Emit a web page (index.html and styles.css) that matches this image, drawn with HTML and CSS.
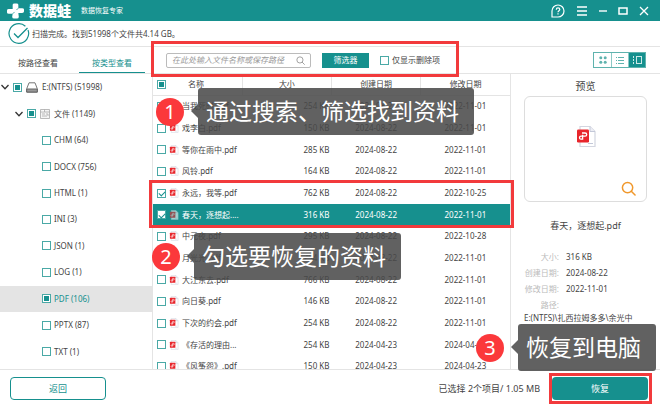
FILE: index.html
```html
<!DOCTYPE html>
<html lang="zh-CN">
<head>
<meta charset="utf-8">
<title>数据蛙数据恢复专家</title>
<link rel="stylesheet" href="styles.css">
</head>
<body>
<svg class="sprite" aria-hidden="true">
  <symbol id="pdf" viewBox="0 0 20 22">
    <path d="M4 1h10l5 5v15H4z" fill="#fff" stroke="#d3d6e0" stroke-width="1.2"/>
    <path d="M14 1v5h5" fill="#eceef4" stroke="#c3c8d8"/>
    <path d="M12 18h5" stroke="#c3c8d8"/>
    <rect x="1" y="4" width="12" height="13" rx="1.2" fill="#e8262c"/>
    <path d="M6 7.500h3.100a1.600 1.600 0 0 1 0 3.200H5a1.500 1.500 0 0 0 0 3h1.600V9.200" fill="none" stroke="#fff" stroke-width="1.300"/>
  </symbol>
  <symbol id="search" viewBox="0 0 16 16">
    <circle cx="7" cy="7" r="5.500" fill="none" stroke="currentColor" stroke-width="1.600"/>
    <path d="M11 11l4 4" stroke="currentColor" stroke-width="1.600" stroke-linecap="round"/>
  </symbol>
  <symbol id="chevron" viewBox="0 0 8 6"><path d="M.5 1L4 4.700 7.500 1" fill="none" stroke="#333" stroke-width="1.300"/></symbol>
</svg>
<div class="app">
  <header class="titlebar">
    <svg class="logo" viewBox="0 0 18 16"><path d="M6 1.500Q6 0 8 0h2q2 0 2 1.500V5h4q2 0 2 1.500v2Q18 10 16 10h-4l.5 4q0 2-2 2h-3q-2 0-2-2L6 11H2q-2 0-2-1.500v-2Q0 6 2 6h4z" fill="#fff"/><path d="M6 11l2-2M12 5l-2 2" stroke="#16908e" stroke-width=".8"/></svg>
    <strong class="brand">数据蛙</strong>
    <span class="slogan">数据恢复专家</span>
    <nav class="window-tools">
      <button type="button" aria-label="帮助"><svg width="14" height="14" viewBox="0 0 14 14"><path d="M1 13V7a6 6 0 1 1 6 6z" fill="none" stroke="#fff" stroke-width="1.200"/><path d="M5.300 5.700c0-2.400 3.500-2.200 3.500-.2C8.800 6.700 7 6.800 7 8.300M7 9.300v1.200" fill="none" stroke="#fff" stroke-width="1.200"/></svg></button>
      <button type="button" aria-label="菜单"><svg width="12" height="12" viewBox="0 0 12 12"><path d="M1 2h10M1 6h10M1 10h10" stroke="#fff" stroke-width="1.300"/></svg></button>
      <button type="button" aria-label="最小化"><svg width="8" height="10" viewBox="0 0 8 10"><path d="M0 5h8" stroke="#fff" stroke-width="1.400"/></svg></button>
      <button type="button" aria-label="最大化"><svg width="10" height="10" viewBox="0 0 10 10"><rect x="1" y="2" width="8" height="6" fill="none" stroke="#fff" stroke-width="1.500"/></svg></button>
      <button type="button" aria-label="关闭"><svg width="10" height="10" viewBox="0 0 10 10"><path d="M1 1l8 8M9 1L1 9" stroke="#fff" stroke-width="1.300"/></svg></button>
    </nav>
  </header>
  <div class="status">
    <svg width="22" height="22" viewBox="0 0 22 22"><path d="M20 7a9.800 9.800 0 1 1-2.600-3.800" fill="none" stroke="#16908e" stroke-width="1.200"/><path d="M6 10.500l4 4L19.500 5" fill="none" stroke="#16908e" stroke-width="1.300"/></svg>
    <span>扫描完成。找到51998个文件共4.14 GB。</span>
  </div>
  <main class="workspace">
    <nav class="tabs">
      <button type="button" class="tab">按路径查看</button>
      <button type="button" class="tab active">按类型查看</button>
    </nav>
    <div class="toolbar">
      <label class="search"><input type="text" placeholder="在此处输入文件名称或保存路径" aria-label="搜索"><svg width="9" height="9"><use href="#search"/></svg></label>
      <button type="button" class="filter">筛选器</button>
      <label class="only"><input type="checkbox" class="box">仅显示删除项</label>
      <div class="views">
        <button type="button" aria-label="图标"><svg width="10" height="10" viewBox="0 0 10 10"><g fill="#5fb3ae"><circle cx="2.800" cy="2.800" r="1.500"/><circle cx="7.200" cy="2.800" r="1.500"/><circle cx="2.800" cy="7.200" r="1.500"/><circle cx="7.200" cy="7.200" r="1.500"/></g></svg></button>
        <button type="button" aria-label="列表"><svg width="10" height="10" viewBox="0 0 10 10"><path d="M1 2.500h1M3 2.500h6M1 5.500h1M3 5.500h6M1 8.500h1M3 8.500h6" stroke="#5fb3ae"/></svg></button>
        <button type="button" class="on" aria-label="预览"><svg width="10" height="10" viewBox="0 0 10 10"><path d="M1.500 1v8" stroke="#cde9e7" stroke-dasharray="2 1"/><rect x="4.500" y="1.500" width="5" height="7" fill="none" stroke="#cde9e7"/></svg></button>
      </div>
    </div>
    <ul class="tree">
      <li class="root"><svg width="8" height="6"><use href="#chevron"/></svg><input type="checkbox" class="box part" id="t0"><svg width="12" height="11" viewBox="0 0 12 11"><path d="M3 .8h6l2.300 6v3.400H.7V6.800z" fill="#fff" stroke="#777"/><path d="M.7 7h10.600v3H.7z" fill="#999" stroke="#666"/></svg><label for="t0">E:(NTFS) (51998)</label></li>
      <li class="branch"><svg width="8" height="6"><use href="#chevron"/></svg><input type="checkbox" class="box part" id="t1"><svg width="10" height="10" viewBox="0 0 10 10"><path d="M.5.5h9v9h-9zM.5 3h4V.5M4.500 3h5M2 5h3M2 7h5M6 5h2v2" fill="#f4f4f4" stroke="#aaa" stroke-width=".8"/></svg><label for="t1">文件 (1149)</label></li>
      <li><input type="checkbox" class="box" id="t2"><label for="t2">CHM (64)</label></li>
      <li><input type="checkbox" class="box" id="t3"><label for="t3">DOCX (756)</label></li>
      <li><input type="checkbox" class="box" id="t4"><label for="t4">HTML (1)</label></li>
      <li><input type="checkbox" class="box" id="t5"><label for="t5">INI (3)</label></li>
      <li><input type="checkbox" class="box" id="t6"><label for="t6">JSON (1)</label></li>
      <li><input type="checkbox" class="box" id="t7"><label for="t7">LOG (1)</label></li>
      <li class="current"><input type="checkbox" class="box part" id="t8"><label for="t8">PDF (106)</label></li>
      <li><input type="checkbox" class="box" id="t9"><label for="t9">PPTX (87)</label></li>
      <li><input type="checkbox" class="box" id="t10"><label for="t10">TXT (1)</label></li>
    </ul>
    <div class="files">
      <table>
        <thead><tr><th><div class="name"><input type="checkbox" class="box part" aria-label="全选"><span class="heading">名称</span></div></th><th>大小</th><th>创建日期</th><th>修改日期</th></tr></thead>
        <tbody>
          <tr><td><label class="name"><input type="checkbox" class="box"><svg class="pdf"><use href="#pdf"/></svg>当我死时.pdf</label></td><td>254 KB</td><td>2024-08-22</td><td>2022-11-01</td></tr>
          <tr><td><label class="name"><input type="checkbox" class="box"><svg class="pdf"><use href="#pdf"/></svg>戏李白.pdf</label></td><td>150 KB</td><td>2024-08-22</td><td>2022-11-01</td></tr>
          <tr><td><label class="name"><input type="checkbox" class="box"><svg class="pdf"><use href="#pdf"/></svg>等你在雨中.pdf</label></td><td>285 KB</td><td>2024-08-22</td><td>2022-11-01</td></tr>
          <tr><td><label class="name"><input type="checkbox" class="box"><svg class="pdf"><use href="#pdf"/></svg>风铃.pdf</label></td><td>164 KB</td><td>2024-08-22</td><td>2022-11-01</td></tr>
          <tr><td><label class="name"><input type="checkbox" class="box" checked><svg class="pdf"><use href="#pdf"/></svg>永远，我等.pdf</label></td><td>762 KB</td><td>2024-08-22</td><td>2022-10-25</td></tr>
          <tr class="selected"><td><label class="name"><input type="checkbox" class="box" checked><svg class="pdf"><use href="#pdf"/></svg>春天，逐想起....</label></td><td>316 KB</td><td>2024-08-22</td><td>2022-11-01</td></tr>
          <tr><td><label class="name"><input type="checkbox" class="box"><svg class="pdf"><use href="#pdf"/></svg>中元夜.pdf</label></td><td>295 KB</td><td>2024-08-22</td><td>2022-10-28</td></tr>
          <tr><td><label class="name"><input type="checkbox" class="box"><svg class="pdf"><use href="#pdf"/></svg>月光光.pdf</label></td><td>254 KB</td><td>2024-08-22</td><td>2022-11-01</td></tr>
          <tr><td><label class="name"><input type="checkbox" class="box"><svg class="pdf"><use href="#pdf"/></svg>大江东去.pdf</label></td><td>766 KB</td><td>2024-08-22</td><td>2022-11-01</td></tr>
          <tr><td><label class="name"><input type="checkbox" class="box"><svg class="pdf"><use href="#pdf"/></svg>向日葵.pdf</label></td><td>146 KB</td><td>2024-08-22</td><td>2022-11-01</td></tr>
          <tr><td><label class="name"><input type="checkbox" class="box"><svg class="pdf"><use href="#pdf"/></svg>下次的约会.pdf</label></td><td>254 KB</td><td>2024-08-22</td><td>2022-11-01</td></tr>
          <tr><td><label class="name"><input type="checkbox" class="box"><svg class="pdf"><use href="#pdf"/></svg>《存活的理由...</label></td><td>254 KB</td><td>2024-04-23</td><td>2024-04-23</td></tr>
          <tr><td><label class="name"><input type="checkbox" class="box"><svg class="pdf"><use href="#pdf"/></svg>《风筝怨》.pdf</label></td><td>150 KB</td><td>2024-04-23</td><td>2024-04-23</td></tr>
        </tbody>
      </table>
    </div>
    <aside class="preview">
      <h2>预览</h2>
      <div class="thumb">
        <svg width="20" height="23"><use href="#pdf"/></svg>
        <button type="button" class="zoom" aria-label="放大"><svg width="15" height="15"><use href="#search"/></svg></button>
      </div>
      <p class="filename">春天，逐想起.pdf</p>
      <dl>
        <dt>大小:</dt><dd>316 KB</dd>
        <dt>创建日期:</dt><dd>2024-08-22</dd>
        <dt>修改日期:</dt><dd>2022-11-01</dd>
        <dt>路径:</dt><dd></dd>
      </dl>
      <p class="path">E:(NTFS)\扎西拉姆多多\余光中</p>
    </aside>
  </main>
  <footer class="footer">
    <button type="button" class="back">返回</button>
    <span class="summary">已选择 2个项目/ 1.05 MB</span>
    <button type="button" class="recover">恢复</button>
  </footer>
  <div class="frame frame-search"></div>
  <div class="frame frame-rows"></div>
  <div class="frame frame-recover"></div>
  <div class="step step-1"><span class="num">1</span><span class="tip">通过搜索、筛选找到资料</span></div>
  <div class="step step-2"><span class="num">2</span><span class="tip">勾选要恢复的资料</span></div>
  <div class="step step-3"><span class="num">3</span><span class="tip">恢复到电脑</span></div>
</div>
</body>
</html>
```
FILE: styles.css
```css
* { box-sizing: border-box; }

:root {
  --teal: #16908e;
  --line: #e4e4e4;
  --red: #f23a3c;
}

body {
  margin: 0;
  background: #fff;
  color: #444;
  font: 8px/12px "Noto Sans", "Noto Sans CJK SC", sans-serif;
}

button, input {
  margin: 0;
  padding: 0;
  border: 0;
  background: none;
  color: inherit;
  font: inherit;
}

svg { flex: none; display: block; }

.sprite { position: absolute; width: 0; height: 0; }

.app {
  position: relative;
  display: flex;
  flex-direction: column;
  min-height: 100vh;
}

.titlebar {
  display: flex;
  align-items: center;
  height: 21px;
  padding: 0 11px 0 7px;
  background: var(--teal);
  color: #fff;
}

.logo { width: 17px; height: 16px; }
.brand { margin-left: 5px; font-size: 14px; line-height: 20px; font-weight: 900; }
.slogan { margin-left: 10px; font-size: 7px; }

.window-tools {
  display: flex;
  align-items: center;
  gap: 11px;
  margin-left: auto;
}

.status {
  display: flex;
  align-items: center;
  gap: 2px;
  height: 26px;
  padding-left: 8px;
  border-bottom: 1px solid var(--line);
}

.workspace {
  flex: 1;
  display: grid;
  grid-template-columns: 152px minmax(0, 1fr) 149px;
  grid-template-rows: 27px 1fr;
}

.tabs {
  display: flex;
  gap: 8px;
  padding-left: 5px;
  border-bottom: 1px solid var(--line);
}

.tab { width: 66px; padding-top: 6px; }
.tab.active { color: var(--teal); border-bottom: 1px solid var(--teal); }

.toolbar {
  grid-column: 2 / 4;
  display: flex;
  align-items: center;
  padding: 0 14px;
  border-bottom: 1px solid var(--line);
}

.search {
  display: flex;
  align-items: center;
  width: 145px;
  height: 15px;
  padding: 0 5px;
  border: 1px solid #bbb;
  border-radius: 2px;
  color: #999;
}

.search input { flex: 1; min-width: 0; outline: 0; }
.search input::placeholder { color: #999; font-style: italic; }

.filter {
  width: 47px;
  height: 15px;
  margin-left: 11px;
  background: var(--teal);
  color: #fff;
}

.only { display: flex; align-items: center; gap: 3px; margin-left: 11px; }

.views { display: flex; margin-left: auto; border: 1px solid #5fb3ae; }
.views button { display: flex; align-items: center; justify-content: center; width: 17px; height: 14px; }
.views button + button { border-left: 1px solid #8cc8c5; }
.views .on { background: var(--teal); }

.box {
  flex: none;
  appearance: none;
  display: grid;
  place-items: center;
  width: 9px;
  height: 9px;
  border: 1px solid #4aa9a6;
  background: #fff;
}

.part::before { content: ""; width: 5px; height: 5px; background: var(--teal); }

.box:checked::before {
  content: "";
  width: 5px;
  height: 3px;
  border: solid var(--teal);
  border-width: 0 0 1px 1px;
  transform: rotate(-45deg);
}

.tree {
  display: flex;
  flex-direction: column;
  margin: 0;
  padding: 0 0 4px;
  list-style: none;
}

.tree li {
  flex: 1;
  display: flex;
  align-items: center;
  gap: 3px;
  padding-left: 42px;
}

.tree .root, .tree .branch { gap: 4px; }
.tree .root { padding-left: 1px; }
.tree .branch { padding-left: 15px; }
.tree .current { background: #e4e4e4; color: var(--teal); }

.files {
  height: 295px;
  overflow: hidden;
  border: solid var(--line);
  border-width: 0 1px;
}

table { width: 100%; table-layout: fixed; border-collapse: collapse; }

th {
  height: 21px;
  padding: 0;
  border-bottom: 1px solid var(--line);
  font-weight: 400;
}

th + th { border-left: 1px solid var(--line); }

td { height: 22px; padding: 0; text-align: center; white-space: nowrap; }
tr:nth-child(3n) td { height: 21px; }
td:nth-child(2) { padding-right: 2px; text-align: right; }

.name { display: flex; align-items: center; gap: 3px; padding-left: 4px; }
.name .heading { margin-left: 19px; }
.pdf { width: 10px; height: 10px; }

.selected { background: var(--teal); color: #fff; }
.selected .pdf { opacity: .6; }

.preview { padding: 6px 13px; }
.preview h2 { margin: 0 0 4px; font-size: 10px; line-height: 12px; font-weight: 400; text-align: center; }

.thumb {
  position: relative;
  display: flex;
  justify-content: center;
  height: 106px;
  padding-top: 28px;
  border: 1px solid #ddd;
  border-radius: 6px;
}

.zoom { position: absolute; right: 10px; bottom: 5px; color: #f0982c; }

.filename { margin: 17px 0 16px; font-size: 9px; line-height: 14px; text-align: center; }

dl { display: grid; grid-template-columns: 35px 1fr; column-gap: 7px; margin: 0; line-height: 16px; }
dt { color: #bbb; text-align: right; white-space: nowrap; }
dd { margin: 0; }
.path { margin: 0; line-height: 10px; white-space: nowrap; }

.footer {
  display: flex;
  align-items: center;
  height: 44px;
  padding: 0 12px 6px 10px;
  border-top: 1px solid var(--line);
  font-size: 9px;
}

.back, .recover { width: 96px; height: 23px; border-radius: 4px; }
.back { border: 1px solid var(--teal); color: var(--teal); }
.recover { margin-left: 12px; background: var(--teal); color: #fff; }
.summary { margin-left: auto; }

.frame { position: absolute; border: 3px solid var(--red); pointer-events: none; }
.frame-search { left: 151px; top: 41px; width: 308px; height: 36px; }
.frame-rows { left: 149px; right: 146px; top: 180px; height: 48px; }
.frame-recover { right: 8px; bottom: 9px; width: 103px; height: 31px; }

.step { position: absolute; display: flex; align-items: center; gap: 14px; color: #fff; }
.step-1 { left: 156px; top: 88px; }
.step-2 { left: 152px; top: 233px; }
.step-3 { right: 4px; bottom: 42px; }

.num {
  width: 28px;
  border-radius: 50%;
  background: #fb383b;
  font-size: 20px;
  line-height: 28px;
  text-align: center;
}

.tip {
  position: relative;
  padding: 0 15px 0 8px;
  border-radius: 3px;
  background: rgba(74, 74, 74, .87);
  font-size: 23px;
  line-height: 47px;
  white-space: nowrap;
}

.tip::before {
  content: "";
  position: absolute;
  right: 100%;
  top: 16px;
  border: solid transparent;
  border-width: 7px 7px 7px 0;
  border-right-color: rgba(74, 74, 74, .87);
}
```
